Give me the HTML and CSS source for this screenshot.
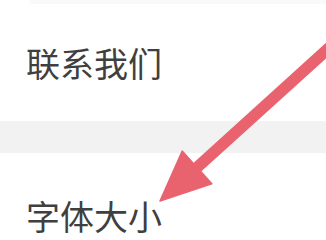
FILE: index.html
```html
<!DOCTYPE html>
<html lang="zh-CN">
<head>
<meta charset="utf-8">
<link rel="stylesheet" href="styles.css">
</head>
<body>
<div class="page">
  <div class="top-divider"></div>
  <div class="row"><span class="label">联系我们</span></div>
  <div class="section-gap"></div>
  <div class="row row-lower"><span class="label">字体大小</span></div>
  <svg class="arrow" width="326" height="238" viewBox="0 0 326 238" xmlns="http://www.w3.org/2000/svg">
    <polygon points="160,201 182.2,151.1 193.6,163.7 341.8,29.5 348.6,36.9 200.4,171.1 211.8,183.7" fill="#e9636f" stroke="#e9636f" stroke-width="1.5" stroke-linejoin="round"/>
  </svg>
</div>
</body>
</html>
```
FILE: styles.css
```css
html, body {
  margin: 0;
  padding: 0;
  background: #ffffff;
}
.page {
  position: relative;
  width: 326px;
  height: 238px;
  overflow: hidden;
  font-family: "Noto Sans CJK SC", "Noto Sans", sans-serif;
}
.top-divider {
  height: 4px;
  margin-left: 30px;
  background: #f9f9f9;
}
.row {
  height: 117px;
  display: flex;
  align-items: center;
  padding-left: 26px;
  background: #ffffff;
}
.row-lower {
  padding-top: 4px;
}
.label {
  font-size: 34px;
  color: #3f3f3f;
  line-height: 1;
}
.section-gap {
  height: 32px;
  background: #f2f2f2;
}
.arrow {
  position: absolute;
  left: 0;
  top: 0;
}
```
